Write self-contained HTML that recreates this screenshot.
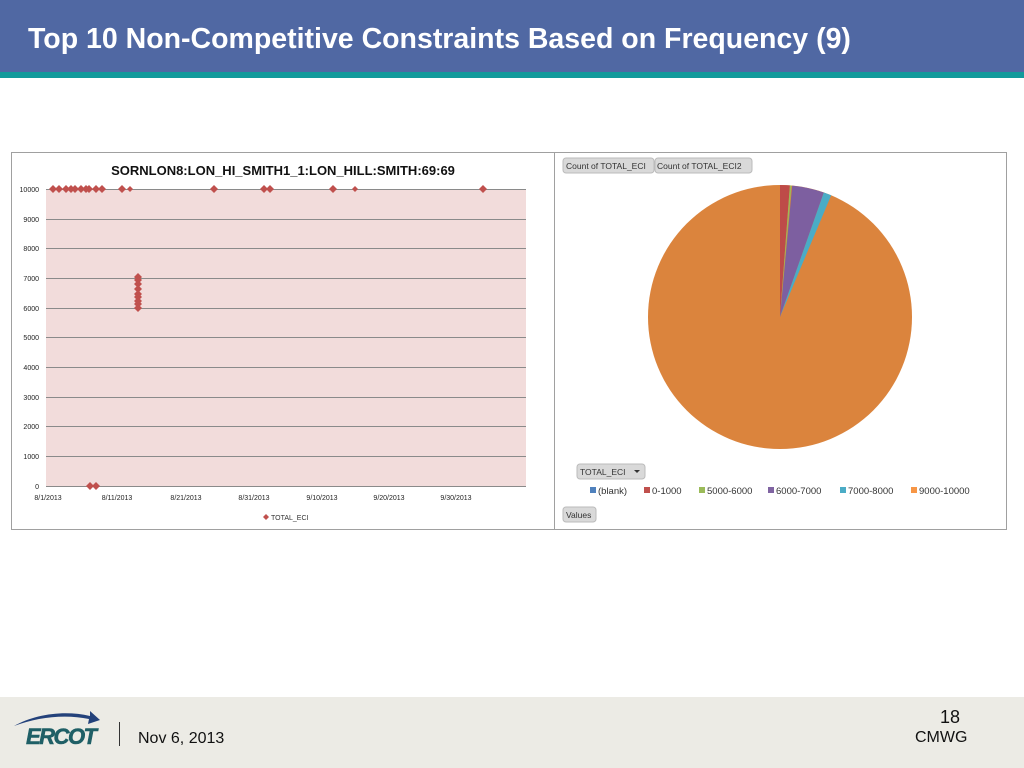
<!DOCTYPE html>
<html><head><meta charset="utf-8"><style>
body{margin:0;width:1024px;height:768px;position:relative;background:#fff;font-family:"Liberation Sans",sans-serif;overflow:hidden}
.hdr{position:absolute;left:0;top:0;width:1024px;height:72px;background:#5068a3}
.teal{position:absolute;left:0;top:72px;width:1024px;height:6px;background:#139a9b}
.title{position:absolute;left:28px;top:23px;color:#fff;font-weight:bold;font-size:28.5px}
.ftr{position:absolute;left:0;top:697px;width:1024px;height:71px;background:#ecebe5}
</style></head><body>
<div class="hdr"></div><div class="teal"></div>
<div class="title">Top 10 Non-Competitive Constraints Based on Frequency (9)</div>

<svg style="position:absolute;left:0;top:0" width="1024" height="768" font-family="Liberation Sans, sans-serif">
<rect x="11.5" y="152.5" width="995" height="377" fill="#fff" stroke="#a0a0a0"/>
<line x1="554.5" y1="152" x2="554.5" y2="530" stroke="#a0a0a0"/>
<text x="283" y="175" font-size="13" font-weight="bold" text-anchor="middle" fill="#111">SORNLON8:LON_HI_SMITH1_1:LON_HILL:SMITH:69:69</text>
<rect x="46" y="189" width="480" height="297" fill="#f2dcdb"/>
<g stroke="#8a8a8a" stroke-width="1">
<line x1="46" y1="189.5" x2="526" y2="189.5"/><line x1="46" y1="219.5" x2="526" y2="219.5"/><line x1="46" y1="248.5" x2="526" y2="248.5"/><line x1="46" y1="278.5" x2="526" y2="278.5"/><line x1="46" y1="308.5" x2="526" y2="308.5"/><line x1="46" y1="337.5" x2="526" y2="337.5"/><line x1="46" y1="367.5" x2="526" y2="367.5"/><line x1="46" y1="397.5" x2="526" y2="397.5"/><line x1="46" y1="426.5" x2="526" y2="426.5"/><line x1="46" y1="456.5" x2="526" y2="456.5"/><line x1="46" y1="486.5" x2="526" y2="486.5"/>
</g>
<g font-size="7" fill="#222" text-anchor="end">
<text x="39" y="192">10000</text><text x="39" y="222">9000</text><text x="39" y="251">8000</text><text x="39" y="281">7000</text><text x="39" y="311">6000</text><text x="39" y="340">5000</text><text x="39" y="370">4000</text><text x="39" y="400">3000</text><text x="39" y="429">2000</text><text x="39" y="459">1000</text><text x="39" y="489">0</text>
</g>
<g font-size="7" fill="#222" text-anchor="middle">
<text x="48" y="500">8/1/2013</text><text x="117" y="500">8/11/2013</text><text x="186" y="500">8/21/2013</text><text x="254" y="500">8/31/2013</text><text x="322" y="500">9/10/2013</text><text x="389" y="500">9/20/2013</text><text x="456" y="500">9/30/2013</text>
</g>
<g fill="#c0504d">
<path d="M0,-4L4,0L0,4L-4,0Z" transform="translate(53,189)"/>
<path d="M0,-4L4,0L0,4L-4,0Z" transform="translate(59,189)"/><path d="M0,-4L4,0L0,4L-4,0Z" transform="translate(66,189)"/><path d="M0,-4L4,0L0,4L-4,0Z" transform="translate(71,189)"/><path d="M0,-4L4,0L0,4L-4,0Z" transform="translate(75,189)"/><path d="M0,-4L4,0L0,4L-4,0Z" transform="translate(81,189)"/><path d="M0,-4L4,0L0,4L-4,0Z" transform="translate(86,189)"/><path d="M0,-4L4,0L0,4L-4,0Z" transform="translate(89,189)"/><path d="M0,-4L4,0L0,4L-4,0Z" transform="translate(96,189)"/><path d="M0,-4L4,0L0,4L-4,0Z" transform="translate(102,189)"/><path d="M0,-4L4,0L0,4L-4,0Z" transform="translate(122,189)"/><path d="M0,-3L3,0L0,3L-3,0Z" transform="translate(130,189)"/><path d="M0,-4L4,0L0,4L-4,0Z" transform="translate(214,189)"/><path d="M0,-4L4,0L0,4L-4,0Z" transform="translate(264,189)"/><path d="M0,-4L4,0L0,4L-4,0Z" transform="translate(270,189)"/><path d="M0,-4L4,0L0,4L-4,0Z" transform="translate(333,189)"/><path d="M0,-3L3,0L0,3L-3,0Z" transform="translate(355,189)"/><path d="M0,-4L4,0L0,4L-4,0Z" transform="translate(483,189)"/>
<path d="M0,-4L4,0L0,4L-4,0Z" transform="translate(90,486)"/><path d="M0,-4L4,0L0,4L-4,0Z" transform="translate(96,486)"/>
<path d="M0,-4L4,0L0,4L-4,0Z" transform="translate(138,277)"/><path d="M0,-4L4,0L0,4L-4,0Z" transform="translate(138,280)"/><path d="M0,-4L4,0L0,4L-4,0Z" transform="translate(138,284)"/><path d="M0,-4L4,0L0,4L-4,0Z" transform="translate(138,289)"/><path d="M0,-4L4,0L0,4L-4,0Z" transform="translate(138,294)"/><path d="M0,-4L4,0L0,4L-4,0Z" transform="translate(138,297)"/><path d="M0,-4L4,0L0,4L-4,0Z" transform="translate(138,301)"/><path d="M0,-4L4,0L0,4L-4,0Z" transform="translate(138,304)"/><path d="M0,-4L4,0L0,4L-4,0Z" transform="translate(138,308)"/>
<path d="M0,-3L3,0L0,3L-3,0Z" transform="translate(266,517)"/>
</g>
<text x="271" y="520" font-size="7" fill="#333">TOTAL_ECI</text>

<circle cx="780" cy="317" r="132" fill="#db843d"/>
<path d="M780,317L780,185A132,132 0 0 1 789.9,185.4Z" fill="#be4b48"/>
<path d="M780,317L789.9,185.4A132,132 0 0 1 791.5,185.5Z" fill="#9bbb59"/>
<path d="M780,317L792.2,185.6A132,132 0 0 1 823.8,192.5Z" fill="#7d5fa0"/>
<path d="M780,317L823.8,192.5A132,132 0 0 1 831.2,195.3Z" fill="#4aacc6"/>
<g font-size="8.5" fill="#333">
<rect x="563" y="158" width="91" height="15" rx="3" fill="#d9d9d9" stroke="#bbb"/><text x="566" y="169">Count of TOTAL_ECI</text>
<rect x="655" y="158" width="97" height="15" rx="3" fill="#d9d9d9" stroke="#bbb"/><text x="657" y="169">Count of TOTAL_ECI2</text>
<rect x="577" y="464" width="68" height="15" rx="3" fill="#d9d9d9" stroke="#bbb"/><text x="580" y="475">TOTAL_ECI</text><path d="M634,470h6l-3,3z" fill="#333"/>
<rect x="563" y="507" width="33" height="15" rx="3" fill="#d9d9d9" stroke="#bbb"/><text x="566" y="518">Values</text>
</g>
<g font-size="9.5" fill="#333">
<rect x="590" y="487" width="6" height="6" fill="#4f81bd"/><text x="598" y="494">(blank)</text>
<rect x="644" y="487" width="6" height="6" fill="#c0504d"/><text x="652" y="494">0-1000</text>
<rect x="699" y="487" width="6" height="6" fill="#9bbb59"/><text x="707" y="494">5000-6000</text>
<rect x="768" y="487" width="6" height="6" fill="#8064a2"/><text x="776" y="494">6000-7000</text>
<rect x="840" y="487" width="6" height="6" fill="#4bacc6"/><text x="848" y="494">7000-8000</text>
<rect x="911" y="487" width="6" height="6" fill="#f79646"/><text x="919" y="494">9000-10000</text>
</g>
</svg>

<div class="ftr"></div>
<svg style="position:absolute;left:10px;top:706px" width="95" height="42">
<path d="M4,20 C25,8 55,4 80,10 L80,5 L90,14 L78,18 L79,13 C55,8 28,11 4,20Z" fill="#23417a"/>
<text x="16" y="38" font-family="Liberation Sans,sans-serif" font-weight="bold" font-style="italic" font-size="22" fill="#1f5f66" stroke="#1f5f66" stroke-width="0.6" letter-spacing="-1.5">ERCOT</text>
</svg>
<div style="position:absolute;left:119px;top:722px;width:1px;height:24px;background:#333"></div>
<div style="position:absolute;left:138px;top:730px;font-size:16px;color:#111">Nov 6, 2013</div>
<div style="position:absolute;left:940px;top:707px;font-size:18px;color:#111">18</div>
<div style="position:absolute;left:915px;top:729px;font-size:16px;color:#111">CMWG</div>
</body></html>
